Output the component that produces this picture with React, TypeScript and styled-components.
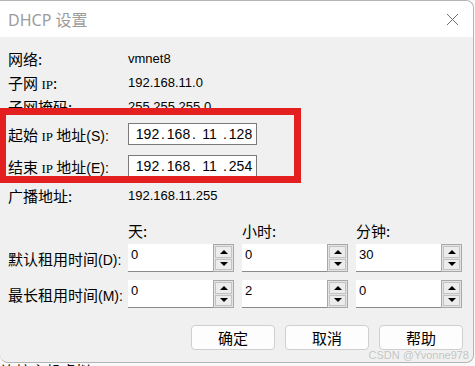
import styled, { createGlobalStyle } from 'styled-components';

const GlobalStyle = createGlobalStyle`
  html, body {
    margin: 0;
    padding: 0;
    background: #f9f9f9;
  }
  body {
    font-family: "Liberation Sans", "Noto Sans CJK SC", sans-serif;
    color: #000;
  }
`;

const Page = styled.div`
  position: relative;
  width: 475px;
  height: 366px;
  overflow: hidden;
  background: #f9f9f9;
`;

const Dialog = styled.div`
  position: relative;
  width: 474px;
  height: 363px;
  box-sizing: border-box;
  border: 1px solid #b4b4b4;
  border-left: none;
  border-radius: 0 8px 8px 8px;
  background: #f0f0f0;
  overflow: hidden;
  display: flex;
  flex-direction: column;
`;

const TitleBar = styled.div`
  height: 36px;
  flex-shrink: 0;
  background: #fff;
  display: flex;
  align-items: center;
  justify-content: space-between;
  padding: 0 14px 0 8px;
`;

const Title = styled.span`
  font-family: "Noto Sans", "Noto Sans CJK SC", sans-serif;
  font-size: 16px;
  color: #9c9c9c;
`;

const Body = styled.div`
  flex: 1;
  padding: 9px 0 0 8px;
  display: flex;
  flex-direction: column;
`;

const Row = styled.div<{ $h: number }>`
  height: ${(p) => p.$h}px;
  display: flex;
  align-items: center;
`;

const Label = styled.div`
  width: 120px;
  flex-shrink: 0;
  font-family: "Noto Sans CJK SC", sans-serif;
  font-size: 15px;
  white-space: nowrap;
`;

const Latin = styled.span`
  font-family: "Liberation Serif", serif;
  font-size: 13px;
`;

const Key = styled.span`
  font-family: "Liberation Sans", sans-serif;
  font-size: 14px;
`;

const Value = styled.div`
  font-size: 13px;
`;

const IpBox = styled.div`
  width: 129px;
  height: 22px;
  box-sizing: border-box;
  border: 1px solid #7a7a7a;
  background: #fff;
  display: flex;
  align-items: center;
  padding-left: 5px;
  font-size: 14px;
`;

const IpCell = styled.span`
  width: 27px;
  text-align: center;
`;

const IpDot = styled.span`
  width: 4px;
  display: flex;
  justify-content: center;
`;

const Header = styled.div`
  width: 106px;
  font-family: "Noto Sans CJK SC", sans-serif;
  font-size: 15px;
`;

const Columns = styled.div`
  display: flex;
  gap: 8px;
`;

const Spin = styled.div`
  display: flex;
  width: 106px;
  height: 28px;
`;

const SpinField = styled.div`
  width: 85px;
  box-sizing: border-box;
  background: #fff;
  border-bottom: 1px solid #8a8a8a;
  padding: 3px 0 0 3px;
  font-size: 13px;
`;

const SpinButtons = styled.div`
  width: 21px;
  box-sizing: border-box;
  border: 1px solid #a8a8a8;
  background: #e3e3e3;
  padding: 1px;
  display: flex;
  flex-direction: column;
  gap: 1px;
`;

const SpinBtn = styled.div`
  flex: 1;
  border: 1px solid #c3c3c3;
  background: #ececec;
  display: flex;
  align-items: center;
  justify-content: center;
`;

const Arrow = styled.span<{ $up?: boolean }>`
  width: 0;
  height: 0;
  border-left: 4px solid transparent;
  border-right: 4px solid transparent;
  ${(p) => (p.$up ? 'border-bottom: 4px solid #000;' : 'border-top: 4px solid #000;')}
`;

const Actions = styled.div`
  display: flex;
  justify-content: flex-end;
  gap: 10px;
  padding-right: 10px;
  margin-top: 17px;
`;

const Button = styled.button`
  width: 84px;
  height: 25px;
  border: 1px solid #cfcfcf;
  border-radius: 4px;
  background: #fdfdfd;
  font-family: "Noto Sans CJK SC", sans-serif;
  font-size: 15px;
  color: #000;
  padding: 0;
`;

const Highlight = styled.div`
  position: absolute;
  left: -1px;
  top: 108px;
  width: 302px;
  height: 75px;
  box-sizing: border-box;
  border: 7px solid #e41f1f;
  pointer-events: none;
`;

const Watermark = styled.div`
  position: absolute;
  right: 4px;
  bottom: 1px;
  font-size: 11px;
  color: #c2c2c2;
  text-shadow: 0 0 1px #fff;
`;

const Behind = styled.div`
  font-family: "Noto Sans CJK SC", sans-serif;
  font-size: 15px;
  line-height: 15px;
  padding-left: 1px;
`;

const Close = () => (
  <svg width="13" height="13" viewBox="0 0 13 13">
    <path d="M1 1 L12 12 M12 1 L1 12" stroke="#6f6f6f" strokeWidth="1" fill="none" />
  </svg>
);

const SpinBox = ({ value }: { value: string }) => (
  <Spin>
    <SpinField>{value}</SpinField>
    <SpinButtons>
      <SpinBtn>
        <Arrow $up />
      </SpinBtn>
      <SpinBtn>
        <Arrow />
      </SpinBtn>
    </SpinButtons>
  </Spin>
);

const IpInput = ({ parts }: { parts: string[] }) => (
  <IpBox>
    {parts.map((part, i) => (
      <span key={i} style={{ display: 'contents' }}>
        {i > 0 && <IpDot>.</IpDot>}
        <IpCell>{part}</IpCell>
      </span>
    ))}
  </IpBox>
);

const App = () => {
  return (
    <Page>
      <GlobalStyle />
      <Dialog>
        <TitleBar>
          <Title>DHCP 设置</Title>
          <Close />
        </TitleBar>
        <Body>
          <Row $h={24}>
            <Label>网络:</Label>
            <Value>vmnet8</Value>
          </Row>
          <Row $h={24}>
            <Label>
              子网 <Latin>IP</Latin>:
            </Label>
            <Value>192.168.11.0</Value>
          </Row>
          <Row $h={24}>
            <Label>子网掩码:</Label>
            <Value>255.255.255.0</Value>
          </Row>
          <Row $h={32}>
            <Label>
              起始 <Latin>IP</Latin> 地址<Key>(S):</Key>
            </Label>
            <IpInput parts={['192', '168', '11', '128']} />
          </Row>
          <Row $h={32}>
            <Label>
              结束 <Latin>IP</Latin> 地址<Key>(E):</Key>
            </Label>
            <IpInput parts={['192', '168', '11', '254']} />
          </Row>
          <Row $h={26}>
            <Label>广播地址:</Label>
            <Value>192.168.11.255</Value>
          </Row>
          <Row $h={20} style={{ marginTop: 12, marginBottom: 4 }}>
            <Label />
            <Columns>
              <Header>天:</Header>
              <Header>小时:</Header>
              <Header>分钟:</Header>
            </Columns>
          </Row>
          <Row $h={28}>
            <Label>
              默认租用时间<Key>(D):</Key>
            </Label>
            <Columns>
              <SpinBox value="0" />
              <SpinBox value="0" />
              <SpinBox value="30" />
            </Columns>
          </Row>
          <Row $h={28} style={{ marginTop: 8 }}>
            <Label>
              最长租用时间<Key>(M):</Key>
            </Label>
            <Columns>
              <SpinBox value="0" />
              <SpinBox value="2" />
              <SpinBox value="0" />
            </Columns>
          </Row>
          <Actions>
            <Button>确定</Button>
            <Button>取消</Button>
            <Button>帮助</Button>
          </Actions>
        </Body>
        <Watermark>CSDN @Yvonne978</Watermark>
      </Dialog>
      <Highlight />
      <Behind>连接主机虚拟</Behind>
    </Page>
  );
};

export default App;
